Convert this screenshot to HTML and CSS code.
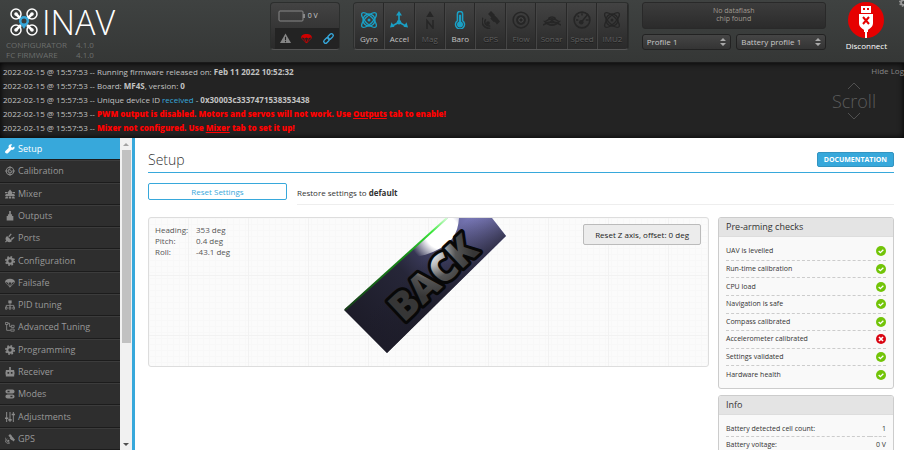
FILE: index.html
```html
<!DOCTYPE html>
<html lang="en">
<head>
<meta charset="utf-8">
<title>INAV Configurator</title>
<link rel="stylesheet" href="styles.css">
</head>
<body>
<svg class="defs" aria-hidden="true">
  <symbol id="atom" viewBox="0 0 24 24"><g fill="none" stroke="currentColor" stroke-width="1.800"><ellipse cx="12" cy="12" rx="13" ry="5" transform="rotate(45 12 12)"/><ellipse cx="12" cy="12" rx="13" ry="5" transform="rotate(-45 12 12)"/><circle cx="12" cy="12" r="8"/></g><circle cx="12" cy="12" r="2" fill="currentColor"/></symbol>
  <symbol id="axes" viewBox="0 0 24 24"><path d="M12 3v12M12 15L3 20M12 15l9 5" fill="none" stroke="currentColor" stroke-width="2.2"/><path d="M12 0l4 6H8zM0 22l2-7 4 6zM24 22l-2-7-4 6z" fill="currentColor"/><circle cx="12" cy="15" r="3" fill="currentColor"/></symbol>
  <symbol id="north" viewBox="0 0 24 24"><path d="M12 0l5 8H7z" fill="currentColor"/><path d="M8 24V13l8 10V12" fill="none" stroke="currentColor" stroke-width="2"/></symbol>
  <symbol id="thermo" viewBox="0 0 24 24"><path d="M8.500 13V4a3.500 3.500 0 0 1 7 0v9a6 6 0 1 1-7 0z" fill="none" stroke="currentColor" stroke-width="2"/><circle cx="12" cy="18" r="4" fill="currentColor"/><path d="M12 18V5" stroke="currentColor" stroke-width="3"/></symbol>
  <symbol id="sat" viewBox="0 0 24 24"><path d="M8 4l4-4 5 5-4 4zM16 13l4-4 4 5-4 4zM13 8l3-3 5 5-5 5-5-5z" fill="currentColor"/><circle cx="8" cy="16" r="2.500" fill="currentColor"/><path d="M5 11c-3 4 0 10 6 9M1 9c-3 8 2 15 10 14" fill="none" stroke="currentColor" stroke-width="2"/></symbol>
  <symbol id="flow" viewBox="0 0 24 24"><circle cx="12" cy="12" r="10.500" fill="none" stroke="currentColor" stroke-width="2"/><circle cx="12" cy="12" r="6.500" fill="currentColor"/><circle cx="12" cy="12" r="3" fill="none" stroke="#555" stroke-width="1"/></symbol>
  <symbol id="sonar" viewBox="0 0 24 24"><path d="M0 9q12 9 24 0M3 14q9 7 18 0M7 18q5 4 10 0" fill="none" stroke="currentColor" stroke-width="2" transform="matrix(1 0 0 -1 0 28)"/><path d="M0 13q12 14 24 0l-2 0q-10 9-20 0z" fill="currentColor"/><circle cx="12" cy="14" r="2.500" fill="currentColor"/></symbol>
  <symbol id="gauge" viewBox="0 0 24 24"><circle cx="12" cy="12" r="10.500" fill="none" stroke="currentColor" stroke-width="2.200"/><path d="M11 15l9-11M4 12h3M12 3v3M6 6l2 2M17 12h4" fill="none" stroke="currentColor" stroke-width="2"/><circle cx="11" cy="15" r="3" fill="currentColor"/></symbol>
  <symbol id="chute" viewBox="0 0 24 24"><path d="M0 11C0 5 5 2 12 2s12 3 12 9l-4-1-4 2-4-2-4 2-4-2z" fill="currentColor"/><path d="M1 11l11 11 11-11M8 12l4 10 4-10" fill="none" stroke="currentColor" stroke-width="1.600"/></symbol>
  <symbol id="gear" viewBox="0 0 24 24"><circle cx="12" cy="12" r="6.500" fill="none" stroke="currentColor" stroke-width="5"/><circle cx="12" cy="12" r="10" fill="none" stroke="currentColor" stroke-width="4" stroke-dasharray="4 3.850"/></symbol>
  <symbol id="wrench" viewBox="0 0 24 24"><path d="M22 6l-5 3-3-3 3-5C11-1 7 4 9 9L1 17c-3 4 2 8 6 5l8-8c6 1 10-4 7-8z" fill="currentColor"/></symbol>
  <symbol id="target" viewBox="0 0 24 24"><circle cx="12" cy="12" r="9" fill="none" stroke="currentColor" stroke-width="2.500"/><path d="M12 0v9M12 15v9M0 12h9M15 12h9M9 7l8 8-8 2z" stroke="currentColor" stroke-width="2" fill="none"/></symbol>
  <symbol id="mixer" viewBox="0 0 24 24"><path d="M7 7l5-6 5 6v5H7zM0 7h6v3H0zM18 7h6v3h-6zM2 12h20l2 5H0zM2 18h5v5H0zM9 18h6v5H9zM17 18h5l2 5h-7z" fill="currentColor"/></symbol>
  <symbol id="motor" viewBox="0 0 24 24"><path d="M10 0h4v9h-4zM7 8h10v4H7zM4 12h16v11H4z" fill="currentColor"/></symbol>
  <symbol id="plug" viewBox="0 0 24 24"><path d="M5 7l12 12c-4 4-9 4-12 1l-3 3-2-2 3-3C0 15 1 10 5 7z" fill="currentColor"/><path d="M9 9l6-7M15 16l7-6M15 13l6-1" stroke="currentColor" stroke-width="3"/></symbol>
  <symbol id="tree" viewBox="0 0 24 24"><path d="M12 6v12M3 18v-5h18v5" stroke="currentColor" stroke-width="2" fill="none"/><path d="M8 1h8v7H8z" fill="currentColor"/><g fill="none" stroke="currentColor" stroke-width="2"><path d="M1 17h4v5H1zM10 17h4v5h-4zM19 17h4v5h-4z"/></g></symbol>
  <symbol id="branch" viewBox="0 0 24 24"><path d="M1 1h6v5H1zM4 6v14h9M7 3h4v8h4" fill="none" stroke="currentColor" stroke-width="2"/><path d="M15 8h7v5h-7zM14 17h8v5h-8z" fill="none" stroke="currentColor" stroke-width="2"/></symbol>
  <symbol id="radio" viewBox="0 0 24 24"><path d="M10 0h4v7h8v16H2V7h8zM6 12v4h4v-4zM14 12v4h4v-4z" fill="currentColor" fill-rule="evenodd"/><path d="M0 11v7M24 11v7" stroke="currentColor" stroke-width="2"/></symbol>
  <symbol id="toggles" viewBox="0 0 24 24"><path d="M6 1h12a5 5 0 0 1 0 10H6A5 5 0 0 1 6 1zm0 3v4h5V4zM6 13h12a5 5 0 0 1 0 10H6a5 5 0 0 1 0-10zm7 3v4h5v-4z" fill="currentColor" fill-rule="evenodd"/></symbol>
  <symbol id="sliders" viewBox="0 0 24 24"><path d="M4 0v24M12 0v24M20 0v24" stroke="currentColor" stroke-width="2.400"/><path d="M0 13h8v4H0zM8 17h8v4H8zM16 4h8v4h-8z" fill="currentColor"/></symbol>
  <symbol id="ok" viewBox="0 0 12 12"><circle cx="6" cy="6" r="6" fill="#72c408"/><path d="M3.200 6l2 2 3.600-3.600" fill="none" stroke="#fff" stroke-width="1.600"/></symbol>
  <symbol id="bad" viewBox="0 0 12 12"><circle cx="6" cy="6" r="6" fill="#d90512"/><path d="M3.600 3.600l4.800 4.800M8.400 3.600L3.600 8.400" stroke="#fff" stroke-width="2"/></symbol>
</svg>

<header class="top">
  <div class="brand">
    <div class="logo">
      <svg class="quad" viewBox="0 0 28 28" aria-hidden="true">
        <g fill="none" stroke="#fff" stroke-width="1.500"><circle cx="6" cy="6" r="5"/><circle cx="22" cy="6" r="5"/><circle cx="6" cy="22" r="5"/><circle cx="22" cy="22" r="5"/><path d="M6 6l5 5M22 6l-5 5M6 22l5-5M22 22l-5-5" stroke-width="2.500"/></g>
        <g fill="#fff"><circle cx="6" cy="6" r="1.800"/><circle cx="22" cy="6" r="1.800"/><circle cx="6" cy="22" r="1.800"/><circle cx="22" cy="22" r="1.800"/></g>
        <path d="M14 21c-2-4-5-5-5-8a5 5 0 0 1 10 0c0 3-3 4-5 8z" fill="#37a8db"/><circle cx="14" cy="13" r="2.500" fill="#3a3c3b"/>
      </svg>
      <span>INAV</span>
    </div>
    <dl class="versions"><dt>CONFIGURATOR</dt><dd>4.1.0</dd><dt>FC FIRMWARE</dt><dd>4.1.0</dd></dl>
  </div>
  <div class="power">
    <div class="battery"><svg viewBox="0 0 28 12" aria-hidden="true"><rect x="1" y="1" width="24" height="10" rx="1" fill="none" stroke="#888" stroke-width="1"/><path d="M25 4h2v4h-2z" fill="#888"/></svg><span>0 V</span></div>
    <div class="status">
      <svg viewBox="0 0 24 24" class="warn"><path d="M12 1l12 21H0z" fill="currentColor"/><path d="M12 8v7M12 17v3" stroke="#222" stroke-width="2.400"/></svg>
      <svg class="fail"><use href="#chute"/></svg>
      <svg viewBox="0 0 24 24" class="link"><g fill="none" stroke="currentColor" stroke-width="3" transform="rotate(-45 12 12)"><rect x="-1" y="8" width="14" height="8" rx="4"/><rect x="11" y="8" width="14" height="8" rx="4"/></g></svg>
    </div>
  </div>
  <ul class="sensors">
    <li class="on"><svg><use href="#atom"/></svg>Gyro</li>
    <li class="on"><svg><use href="#axes"/></svg>Accel</li>
    <li><svg><use href="#north"/></svg>Mag</li>
    <li class="on"><svg><use href="#thermo"/></svg>Baro</li>
    <li><svg><use href="#sat"/></svg>GPS</li>
    <li><svg><use href="#flow"/></svg>Flow</li>
    <li><svg><use href="#sonar"/></svg>Sonar</li>
    <li><svg><use href="#gauge"/></svg>Speed</li>
    <li><svg><use href="#atom"/></svg>IMU2</li>
  </ul>
  <div class="profiles">
    <div class="flash">No dataflash<br>chip found</div>
    <div class="selects">
      <div class="pick"><select aria-label="Profile"><option>Profile 1</option></select><svg viewBox="0 0 6 8"><path d="M0 3l3-3 3 3zM0 5l3 3 3-3z" fill="currentColor"/></svg></div>
      <div class="pick"><select aria-label="Battery profile"><option>Battery profile 1</option></select><svg viewBox="0 0 6 8"><path d="M0 3l3-3 3 3zM0 5l3 3 3-3z" fill="currentColor"/></svg></div>
    </div>
  </div>
  <button class="connect" type="button">
    <svg viewBox="0 0 36 36" aria-hidden="true"><circle cx="18" cy="18" r="18" fill="#e60000"/><path d="M13 4h10v7H13zM11 12h14v9c0 4-3 5-5 7h-4c-2-2-5-3-5-7zM16 27h4v3h-1v6h-2v-6h-1z" fill="#fff"/><path d="M15 6h2v2h-2zM19 6h2v2h-2z" fill="#e60000"/><path d="M15 15l6 7M21 15l-6 7" stroke="#e60000" stroke-width="2"/></svg>
    Disconnect
  </button>
  <svg class="options"><use href="#gear"/></svg>
</header>

<section class="log">
  <div class="lines">
    <p>2022-02-15 @ 15:57:53 -- Running firmware released on: <b>Feb 11 2022 10:52:32</b></p>
    <p>2022-02-15 @ 15:57:53 -- Board: <b>MF4S</b>, version: <b>0</b></p>
    <p>2022-02-15 @ 15:57:53 -- Unique device ID <span class="blue">received</span> - <b>0x30003c3337471538353438</b></p>
    <p>2022-02-15 @ 15:57:53 -- <strong>PWM output is disabled. Motors and servos will not work. Use <a href="#outputs">Outputs</a> tab to enable!</strong></p>
    <p>2022-02-15 @ 15:57:53 -- <strong>Mixer not configured. Use <a href="#mixer-tab">Mixer</a> tab to set it up!</strong></p>
  </div>
  <div class="scroll"><svg viewBox="0 0 14 8"><path d="M1 7l6-6 6 6"/></svg><span>Scroll</span><svg viewBox="0 0 14 8"><path d="M1 1l6 6 6-6"/></svg></div>
  <a class="hide" href="#log">Hide Log</a>
</section>

<div class="main">
  <nav class="tabs">
    <a class="active" href="#setup"><svg><use href="#wrench"/></svg>Setup</a>
    <a href="#calibration"><svg><use href="#target"/></svg>Calibration</a>
    <a href="#mixer-tab"><svg><use href="#mixer"/></svg>Mixer</a>
    <a href="#outputs"><svg><use href="#motor"/></svg>Outputs</a>
    <a href="#ports"><svg><use href="#plug"/></svg>Ports</a>
    <a href="#configuration"><svg><use href="#gear"/></svg>Configuration</a>
    <a href="#failsafe"><svg><use href="#chute"/></svg>Failsafe</a>
    <a href="#pid"><svg><use href="#tree"/></svg>PID tuning</a>
    <a href="#advanced"><svg><use href="#branch"/></svg>Advanced Tuning</a>
    <a href="#programming"><svg><use href="#gear"/></svg>Programming</a>
    <a href="#receiver"><svg><use href="#radio"/></svg>Receiver</a>
    <a href="#modes"><svg><use href="#toggles"/></svg>Modes</a>
    <a href="#adjustments"><svg><use href="#sliders"/></svg>Adjustments</a>
    <a href="#gps"><svg><use href="#sat"/></svg>GPS</a>
  </nav>
  <div class="bar" aria-hidden="true"><i class="up"></i><div class="track"><div class="thumb"></div></div><i class="down"></i></div>

  <main class="content">
    <div class="title"><h1>Setup</h1><a class="doc" href="#docs">DOCUMENTATION</a></div>
    <div class="reset"><button type="button">Reset Settings</button><p>Restore settings to <b>default</b></p></div>
    <div class="columns">
      <section class="model">
        <svg class="craft" viewBox="0 0 170 140" role="img" aria-label="Aircraft attitude">
          <defs>
            <linearGradient id="board" gradientUnits="userSpaceOnUse" x1="20" y1="110" x2="145" y2="0"><stop offset="0" stop-color="#1d1c29"/><stop offset=".4" stop-color="#262638"/><stop offset=".65" stop-color="#46466e"/><stop offset="1" stop-color="#8988cf"/></linearGradient>
            <linearGradient id="shade" gradientUnits="userSpaceOnUse" x1="125" y1="0" x2="155" y2="32"><stop offset="0" stop-color="#1d1c29" stop-opacity="0"/><stop offset="1" stop-color="#1d1c29" stop-opacity=".85"/></linearGradient>
            <linearGradient id="edge" gradientUnits="userSpaceOnUse" x1="0" y1="92" x2="104" y2="0"><stop offset="0" stop-color="#173c19"/><stop offset=".6" stop-color="#168b16"/><stop offset=".85" stop-color="#3de83d"/><stop offset="1" stop-color="#d8ffd8"/></linearGradient>
            <radialGradient id="glare" gradientUnits="userSpaceOnUse" cx="98" cy="14" r="34"><stop offset="0" stop-color="#fff"/><stop offset=".5" stop-color="#fff"/><stop offset="1" stop-color="#fff" stop-opacity="0"/></radialGradient>
            <radialGradient id="shine" gradientUnits="userSpaceOnUse" cx="66" cy="-34" r="44"><stop offset="0" stop-color="#fff"/><stop offset=".3" stop-color="#bbb"/><stop offset=".6" stop-color="#555"/><stop offset="1" stop-color="#363636"/></radialGradient>
          </defs>
          <path d="M0 92L104 0h44l14 18L43 135z" fill="url(#board)"/>
          <path d="M0 92L104 0h44l14 18L43 135z" fill="url(#shade)"/>
          <path d="M60 39L104 0h11c-1 16-8 26-22 32-10 5-20 8-33 7z" fill="url(#glare)"/>
          <path d="M1 92L103 0" stroke="url(#edge)" stroke-width="2"/>
          <g transform="translate(60 105) rotate(-43)"><text class="side" x="0" y="0" stroke="#080808" stroke-width="6">BACK</text><text class="side" x="0" y="0" fill="url(#shine)" aria-hidden="true">BACK</text></g>
        </svg>
        <dl class="attitude"><dt>Heading:</dt><dd>353 deg</dd><dt>Pitch:</dt><dd>0.4 deg</dd><dt>Roll:</dt><dd>-43.1 deg</dd></dl>
        <button type="button" class="zaxis">Reset Z axis, offset: 0 deg</button>
      </section>
      <div class="side-panels">
        <section class="panel">
          <h2>Pre-arming checks</h2>
          <ul class="checks">
            <li>UAV is levelled<svg><use href="#ok"/></svg></li>
            <li>Run-time calibration<svg><use href="#ok"/></svg></li>
            <li>CPU load<svg><use href="#ok"/></svg></li>
            <li>Navigation is safe<svg><use href="#ok"/></svg></li>
            <li>Compass calibrated<svg><use href="#ok"/></svg></li>
            <li>Accelerometer calibrated<svg><use href="#bad"/></svg></li>
            <li>Settings validated<svg><use href="#ok"/></svg></li>
            <li>Hardware health<svg><use href="#ok"/></svg></li>
          </ul>
        </section>
        <section class="panel">
          <h2>Info</h2>
          <table class="info"><tbody>
            <tr><th scope="row">Battery detected cell count:</th><td>1</td></tr>
            <tr><th scope="row">Battery voltage:</th><td>0 V</td></tr>
          </tbody></table>
        </section>
      </div>
    </div>
  </main>
</div>
</body>
</html>
```
FILE: styles.css
```css
* { box-sizing: border-box; }
body {
  margin: 0;
  height: 100vh;
  display: flex;
  flex-direction: column;
  overflow: hidden;
  font: 8px/12px "Open Sans", "Noto Sans", sans-serif;
  color: #333;
  background: #fff;
}
h1, h2, p, ul, dl, dd { margin: 0; padding: 0; }
ul { list-style: none; }
a { color: inherit; text-decoration: none; }
button, select { font: inherit; }
.defs { position: absolute; width: 0; height: 0; }

/* Header */
.top {
  flex: none;
  position: relative;
  display: flex;
  align-items: flex-start;
  height: 63px;
  padding: 2px 17px 0 6px;
  background: linear-gradient(#3f4241, #353736);
  border-bottom: 1px solid #1a1a1a;
}
.brand { margin-right: auto; }
.logo { display: flex; align-items: center; gap: 4px; height: 38px; padding: 1px 0 0 4px; }
.logo span { font-size: 34px; line-height: 36px; font-weight: 300; color: #fff; }
.quad { width: 28px; height: 28px; }
.versions { display: grid; grid-template-columns: 70px auto; line-height: 10px; color: #6c6e6d; }
.power, .sensors {
  height: 48px;
  border: 1px solid #2c2e2d;
  border-bottom-color: #555;
  border-radius: 4px;
  background: linear-gradient(#434343, #2a2a2a);
  overflow: hidden;
}
.power { width: 70px; margin-right: 13px; }
.battery { display: flex; align-items: center; gap: 2px; height: 25px; padding-left: 7px; font-size: 7px; color: #ccc; }
.battery svg { width: 28px; height: 12px; }
.status { display: flex; justify-content: space-around; align-items: center; height: 21px; margin-left: 4px; background: #232323; }
.status svg { width: 11px; height: 11px; overflow: visible; }
.warn { color: #858585; }
.fail { color: #d00000; }
.link { color: #37a8db; }
.sensors { display: flex; width: 276px; margin-right: 13px; }
.sensors li { flex: 1; display: flex; flex-direction: column; align-items: center; gap: 4px; padding-top: 8px; border-right: 1px solid #282828; border-left: 1px solid #454545; color: #5e5e5e; text-shadow: 0 1px #1a1a1a; }
.sensors li.on { color: #c4c4c4; text-shadow: none; }
.sensors svg { width: 18px; height: 18px; color: #262626; overflow: visible; }
.sensors .on svg { color: #1a9fc4; }
.profiles { width: 184px; margin-right: 20px; }
.flash { height: 27px; padding-top: 4px; border: 1px solid #292929; border-radius: 3px; background: linear-gradient(#3c3c3c, #2b2b2b); font-size: 7px; line-height: 8px; text-align: center; color: #a09a90; }
.selects { display: flex; gap: 5px; margin-top: 5px; }
.pick { position: relative; flex: 1; }
.pick select { display: block; width: 100%; height: 16px; padding: 0 4px; appearance: none; border: 1px solid #222; border-radius: 3px; background: linear-gradient(#454545, #343434); color: #c9c9c9; }
.pick svg { position: absolute; right: 5px; top: 4px; width: 6px; height: 8px; color: #aaa; pointer-events: none; }
.connect { display: flex; flex-direction: column; align-items: center; gap: 2px; padding: 0; border: 0; background: none; color: #fff; line-height: 12px; }
.connect svg { width: 36px; height: 36px; }
.options { position: absolute; right: -4px; top: -2px; width: 9px; height: 9px; color: #999; }

/* Log */
.log { flex: none; position: relative; display: flex; height: 75px; background: #232323; box-shadow: inset 0 0 6px #000; color: #c2c2c2; }
.lines { flex: 1; padding: 2px 3px; line-height: 14px; white-space: nowrap; }
.blue { color: #37a8db; }
.log strong { font-weight: 800; color: #f00; }
.log strong a { text-decoration: underline; }
.scroll { position: absolute; right: 28px; top: 19px; display: flex; flex-direction: column; align-items: center; }
.scroll span { font-size: 18px; line-height: 22px; font-weight: 300; color: #5c5c5c; }
.scroll svg { width: 14px; height: 8px; fill: none; stroke: #505050; stroke-width: 1; }
.hide { position: absolute; right: 0; top: 2px; color: #858585; }

/* Body */
.main { flex: 1; display: flex; min-height: 0; }
.tabs { width: 120px; display: flex; flex-direction: column; font-size: 9px; color: #999; background: #2e2e2e; }
.tabs a { flex: 1; display: flex; align-items: center; gap: 3px; padding-left: 5px; border-bottom: 1px solid #1c1c1c; border-top: 1px solid #3c3c3c; }
.tabs svg { width: 10px; height: 10px; overflow: visible; color: #8a8a8a; }
.tabs .active { background: #37a8db; color: #fff; border-top-color: #37a8db; }
.tabs .active svg { color: #fff; }
.bar { width: 12px; display: flex; flex-direction: column; align-items: center; background: #f1f1f1; }
.bar i { margin: 5px 0 4px; border: 3px solid transparent; }
.bar .up { border-top: 0; border-bottom-color: #a3a3a3; }
.bar .down { border-bottom: 0; border-top-color: #505050; }
.track { flex: 1; }
.thumb { width: 9px; height: 67%; background: #c1c1c1; }
.content { flex: 1; min-width: 0; padding: 13px 10px 0 13px; border-left: 3px solid #37a8db; overflow: hidden; }
.title { display: flex; align-items: flex-start; justify-content: space-between; height: 22px; border-bottom: 1px solid #37a8db; }
.title h1 { font-size: 14px; line-height: 18px; font-weight: 300; color: #333; }
.doc { margin-top: 1px; padding: 0 6px; border: 1px solid #3394c0; border-radius: 2px; background: #37a8db; color: #fff; font-size: 7px; font-weight: 700; line-height: 13px; }
.reset { display: flex; gap: 10px; align-items: flex-start; margin: 10px 0 12px; }
.reset button { width: 139px; height: 17px; padding: 0; border: 1px solid #37a8db; border-radius: 2px; background: #fff; color: #37a8db; }
.reset p { flex: 1; height: 22px; padding-top: 4px; border-bottom: 1px solid #eee; }
.columns { display: flex; gap: 9px; align-items: flex-start; }
.model {
  position: relative;
  flex: 1;
  height: 150px;
  border: 1px solid #ddd;
  border-radius: 3px;
  overflow: hidden;
  background:
    repeating-linear-gradient(90deg, transparent 0 39px, #f2f2f2 39px 40px, transparent 40px 60px),
    repeating-linear-gradient(transparent 0 57px, #f2f2f2 57px 58px, transparent 58px 60px),
    repeating-linear-gradient(90deg, #f8f8f8 0 1px, transparent 1px 6px),
    repeating-linear-gradient(#f8f8f8 0 1px, #fbfbfb 1px 6px);
}
.craft { display: block; width: 170px; height: 140px; margin: 0 auto; }
.side { font: 800 38px "Open Sans", sans-serif; stroke-linejoin: round; }
.attitude { position: absolute; left: 6px; top: 6px; display: grid; grid-template-columns: 41px auto; line-height: 11px; color: #555; }
.zaxis { position: absolute; right: 7px; top: 6px; height: 21px; padding: 0 11px; border: 1px solid #bbb; border-radius: 2px; background: #ececec; color: #222; }
.side-panels { width: 176px; display: grid; gap: 6px; font-size: 7px; }
.panel { border: 1px solid #ccc; border-radius: 3px; background: #f9f9f9; overflow: hidden; }
.panel h2 { padding: 0 7px; background: #e4e4e4; border-bottom: 1px solid #ddd; font-size: 9px; line-height: 18px; font-weight: 400; }
.checks { display: grid; grid-auto-rows: 1fr; height: 141px; margin: 6px 7px 4px; }
.checks li { display: flex; align-items: center; justify-content: space-between; border-bottom: 1px dashed #ccc; }
.checks li:last-child { border-bottom: 0; }
.checks svg { width: 10px; height: 10px; }
.info { width: calc(100% - 14px); margin: 6px 7px; border-collapse: collapse; line-height: 15px; }
.info th { padding: 0; text-align: left; font-weight: 400; }
.info td { padding: 0; text-align: right; }
.info tr { border-bottom: 1px dashed #ccc; }
```
